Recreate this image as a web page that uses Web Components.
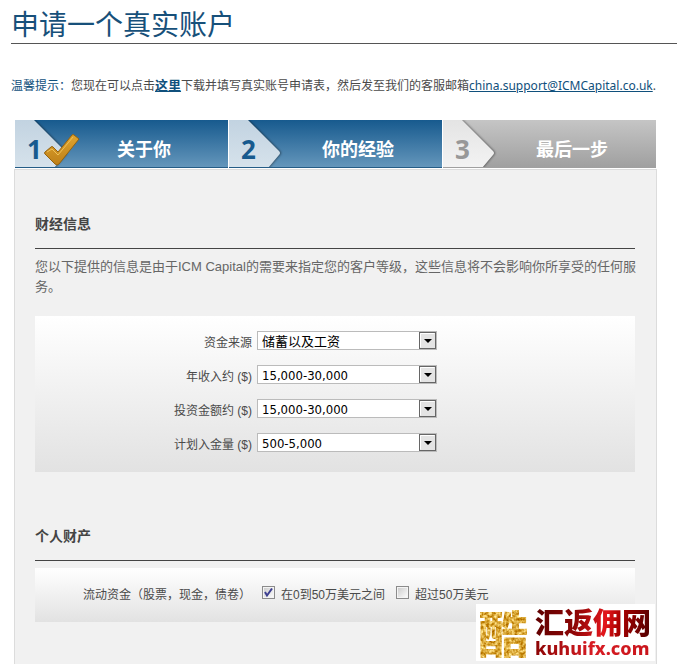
<!DOCTYPE html>
<html lang="zh-CN">
<head>
<meta charset="utf-8">
<meta name="viewport" content="width=device-width, initial-scale=1">
<title>申请一个真实账户</title>
<style>
    body {
        margin: 0;
        background: #fff;
        color: #4a4a4a;
        font: 12px/20px "Noto Sans", "Noto Sans CJK SC", sans-serif;
    }
</style>
</head>
<body>
<account-page>
    <step-item slot="steps" number="1" state="done">关于你</step-item>
    <step-item slot="steps" number="2" state="active">你的经验</step-item>
    <step-item slot="steps" number="3" state="pending">最后一步</step-item>

    <form-section id="form" heading="财经信息" note="您以下提供的信息是由于ICM Capital的需要来指定您的客户等级，这些信息将不会影响你所享受的任何服务。">
        <select-row label="资金来源" options="储蓄以及工资"></select-row>
        <select-row label="年收入约 ($)" options="15,000-30,000"></select-row>
        <select-row label="投资金额约 ($)" options="15,000-30,000"></select-row>
        <select-row label="计划入金量 ($)" options="500-5,000"></select-row>
    </form-section>

    <form-section heading="个人财产">
        <check-row label="流动资金（股票，现金，债卷）">
            <check-option checked>在0到50万美元之间</check-option>
            <check-option>超过50万美元</check-option>
        </check-row>
    </form-section>
</account-page>
<site-badge></site-badge>

<script>
class AccountPage extends HTMLElement {
    constructor() {
        super()
        this.attachShadow({ mode: "open" })
        this.shadowRoot.innerHTML = `
            <style>
                :host {
                    display: flex;
                    flex-direction: column;
                    min-height: 100vh;
                }

                header {
                    margin-left: 11px;
                }

                h1 {
                    margin: 0;
                    padding: 5px 0 0;
                    border-bottom: 1px solid #555;
                    color: #17507a;
                    font-size: 28px;
                    line-height: 38px;
                    font-weight: 400;
                }

                p {
                    margin: 31px 0 24px;
                    white-space: nowrap;
                }

                .tip, a {
                    color: #10507c;
                }

                .here {
                    font-size: 13px;
                    font-weight: 700;
                }

                nav {
                    display: grid;
                    grid-template-columns: repeat(3, 1fr);
                    gap: 1px;
                    margin: 0 21px 1px 15px;
                }

                main {
                    flex: 1;
                    margin: 0 20px 0 14px;
                    padding: 0 21px 0 20px;
                    border: 1px solid #dcdcdc;
                    border-bottom: 0;
                    background: #f1f1f1;
                }
            </style>

            <header>
                <h1>申请一个真实账户</h1>
                <p><span class="tip">温馨提示：</span>您现在可以点击<a class="here" href="#form">这里</a>下载并填写真实账号申请表，然后发至我们的客服邮箱<a href="mailto:china.support@ICMCapital.co.uk">china.support@ICMCapital.co.uk</a>.</p>
            </header>
            <nav><slot name="steps"></slot></nav>
            <main><slot></slot></main>
        `
    }
}

class StepItem extends HTMLElement {
    constructor() {
        super()
        this.attachShadow({ mode: "open" })
    }

    connectedCallback() {
        const number = this.getAttribute("number")
        const state = this.getAttribute("state")
        // The tick is only drawn on a finished step
        const tick = `
            <svg class="tick" width="38" height="36" viewBox="0 0 38 36" aria-hidden="true">
                <defs>
                    <linearGradient id="gold" x1="0" y1="0" x2="0" y2="1">
                        <stop offset="0" stop-color="#e0a52f"/>
                        <stop offset="1" stop-color="#bd7f18"/>
                    </linearGradient>
                </defs>
                <path d="M2 20 8 15Q9 14 10 15L15 20 29 3Q30 2 31 3L36 7 16 32Q14 34 12 32L2 22Q1 21 2 20Z" fill="url(#gold)" stroke="#94620f"/>
                <path d="M4 20 9 17 15 23 30 5" fill="none" stroke="#efc057"/>
            </svg>`
        this.shadowRoot.innerHTML = `
            <style>
                :host {
                    display: block;
                    position: relative;
                    height: 48px;
                    overflow: hidden;
                    box-sizing: border-box;
                    background: linear-gradient(#175a8e, #6496bb);
                    border-bottom: 1px solid #245c86;
                    --arrow-top: #c2d3e1;
                    --arrow-bottom: #d6e2eb;
                    --number: #175a8e;
                }

                :host([state="pending"]) {
                    background: linear-gradient(#c5c5c5, #a0a0a0);
                    border-color: #a0a0a0;
                    --arrow-top: #e4e4e4;
                    --arrow-bottom: #f3f3f3;
                    --number: #989898;
                }

                .arrow, .tick {
                    position: absolute;
                    left: 0;
                    top: 0;
                }

                .arrow {
                    filter: drop-shadow(1px 0 1px rgba(0, 0, 0, .45));
                }

                .tick {
                    left: 28px;
                    top: 12px;
                }

                .content {
                    position: relative;
                    display: flex;
                    align-items: center;
                    padding-top: 10px;
                    color: #fff;
                    font-size: 18px;
                    line-height: 38px;
                    font-weight: 700;
                }

                .number {
                    width: 33px;
                    padding-left: 12px;
                    color: var(--number);
                    font-size: 26px;
                }

                .title {
                    flex: 1;
                    text-align: center;
                }
            </style>

            <svg class="arrow" width="56" height="48" viewBox="0 0 56 48" aria-hidden="true">
                <defs>
                    <linearGradient id="face" x1="0" y1="0" x2="0" y2="1">
                        <stop offset="0" stop-color="var(--arrow-top)"/>
                        <stop offset="1" stop-color="var(--arrow-bottom)"/>
                    </linearGradient>
                </defs>
                <path d="M0 0H19L50 31Q52 33 50 35L39 48H0Z" fill="url(#face)"/>
            </svg>
            <div class="content">
                <span class="number">${number}</span>
                <span class="title"><slot></slot></span>
            </div>
            ${state === "done" ? tick : ""}
        `
    }
}

class FormSection extends HTMLElement {
    constructor() {
        super()
        this.attachShadow({ mode: "open" })
    }

    connectedCallback() {
        const note = this.getAttribute("note")
        this.shadowRoot.innerHTML = `
            <style>
                :host {
                    display: block;
                    margin-bottom: 10px;
                }

                h2 {
                    margin: 0;
                    padding: 44px 0 14px;
                    border-bottom: 1px solid #444;
                    color: #444;
                    font-size: 14px;
                    line-height: 20px;
                    font-weight: 700;
                }

                p {
                    margin: 8px -4px 19px 0;
                    color: #666;
                    font-family: "Liberation Sans", "Noto Sans CJK SC", sans-serif;
                    font-size: 13px;
                }

                .box {
                    margin-top: 7px;
                    padding: 15px 0 19px;
                    background: linear-gradient(#fff, #e2e2e2);
                }
            </style>

            <h2>${this.getAttribute("heading")}</h2>
            ${note ? `<p>${note}</p>` : ""}
            <div class="box"><slot></slot></div>
        `
    }
}

class SelectRow extends HTMLElement {
    constructor() {
        super()
        this.attachShadow({ mode: "open" })
    }

    connectedCallback() {
        const options = this.getAttribute("options").split("|")
        this.shadowRoot.innerHTML = `
            <style>
                :host {
                    display: grid;
                    grid-template-columns: 217px 180px;
                    gap: 5px;
                    align-items: start;
                    margin-bottom: 14px;
                }

                :host(:last-of-type) {
                    margin-bottom: 0;
                }

                label {
                    padding-top: 4px;
                    font-family: "Liberation Sans", "Noto Sans CJK SC", sans-serif;
                    line-height: 16px;
                    text-align: right;
                }

                .field {
                    display: grid;
                    position: relative;
                }

                select {
                    appearance: none;
                    height: 19px;
                    margin: 0;
                    padding: 2px 20px 0 4px;
                    border: 1px solid #bbb;
                    border-radius: 0;
                    background: #fff;
                    color: #000;
                    font: 13px/16px "DejaVu Sans Condensed", "Noto Sans CJK SC", sans-serif;
                }

                svg {
                    position: absolute;
                    right: 0;
                    top: 0;
                    pointer-events: none;
                }
            </style>

            <label for="choice">${this.getAttribute("label")}</label>
            <div class="field">
                <select id="choice">${options.map(text => `<option>${text}</option>`).join("")}</select>
                <svg width="18" height="19" viewBox="0 0 18 19" aria-hidden="true">
                    <rect x=".5" y="1.5" width="16" height="16" fill="#e4e4e4" stroke="#666"/>
                    <path d="M1.500 16.500V2.500H15.500" fill="none" stroke="#fff"/>
                    <path d="M5 8h8l-4 4z" fill="#000"/>
                </svg>
            </div>
        `
    }
}

class CheckRow extends HTMLElement {
    constructor() {
        super()
        this.attachShadow({ mode: "open" })
    }

    connectedCallback() {
        this.shadowRoot.innerHTML = `
            <style>
                :host {
                    display: block;
                    font-family: "Liberation Sans", "Noto Sans CJK SC", sans-serif;
                }

                fieldset {
                    display: flex;
                    gap: 11px;
                    margin: 0;
                    padding: 0 0 0 48px;
                    border: 0;
                }

                .legend {
                    line-height: 16px;
                    padding-top: 4px;
                }
            </style>

            <fieldset aria-labelledby="legend">
                <span class="legend" id="legend">${this.getAttribute("label")}</span>
                <slot></slot>
            </fieldset>
        `
    }
}

class CheckOption extends HTMLElement {
    constructor() {
        super()
        this.attachShadow({ mode: "open" })
        this.shadowRoot.innerHTML = `
            <style>
                :host {
                    display: block;
                }

                label {
                    display: flex;
                    gap: 6px;
                    line-height: 16px;
                    padding-top: 3px;
                }

                .text {
                    padding-top: 1px;
                }

                .mark {
                    display: grid;
                    width: 13px;
                    height: 13px;
                }

                input, svg {
                    grid-area: 1 / 1;
                }

                input {
                    appearance: none;
                    width: 13px;
                    height: 13px;
                    margin: 0;
                    border: 1px solid #8b8b8b;
                    background: linear-gradient(135deg, #c9c9c9, #fff);
                    box-shadow: inset 0 0 0 1px #f4f4f4;
                }

                svg {
                    visibility: hidden;
                    pointer-events: none;
                }

                input:checked + svg {
                    visibility: visible;
                }
            </style>

            <label>
                <span class="mark">
                    <input type="checkbox">
                    <svg width="13" height="13" viewBox="0 0 13 13" aria-hidden="true">
                        <path d="M3 6 5 9.500 10 2.500" fill="none" stroke="#3d3f90" stroke-width="2"/>
                    </svg>
                </span>
                <span class="text"><slot></slot></span>
            </label>
        `
    }

    connectedCallback() {
        this.shadowRoot.querySelector("input").checked = this.hasAttribute("checked")
    }
}

class SiteBadge extends HTMLElement {
    constructor() {
        super()
        this.attachShadow({ mode: "open" })
        this.shadowRoot.innerHTML = `
            <style>
                :host {
                    position: fixed;
                    right: 22px;
                    bottom: 3px;
                    display: flex;
                    gap: 7px;
                    width: 177px;
                    padding-left: 2px;
                    height: 57px;
                    background: #fff;
                    font-family: "Noto Sans", "Noto Sans CJK SC", sans-serif;
                }

                .mark {
                    width: 50px;
                    color: #e2b03c;
                    font: 900 50px/54px "Noto Sans CJK SC", sans-serif;
                    filter: url(#glitter);
                }

                .words {
                    display: flex;
                    flex-direction: column;
                }

                .name, .site {
                    color: transparent;
                    -webkit-background-clip: text;
                    background-clip: text;
                    background-image: linear-gradient(100deg, #5c0000, #8c0505 35%, #e3161c 60%, #a00 72%, #4d0000);
                    font-weight: 900;
                    white-space: nowrap;
                }

                .name {
                    font-family: "Noto Sans CJK SC", sans-serif;
                    font-size: 29px;
                    line-height: 34px;
                }

                .site {
                    background-image: linear-gradient(90deg, #8c0505, #d81d24 50%, #c8141b);
                    font-size: 18px;
                    line-height: 20px;
                    font-weight: 800;
                }

                svg {
                    position: absolute;
                }
            </style>

            <svg width="0" height="0" aria-hidden="true">
                <filter id="glitter" x="0" y="0" width="1" height="1" color-interpolation-filters="sRGB">
                    <feTurbulence type="fractalNoise" baseFrequency=".35" numOctaves="2" seed="4"/>
                    <feColorMatrix values=".6 0 0 0 .56  .9 0 0 0 .22  1.200 0 0 0 -.36  0 0 0 0 1"/>
                    <feComposite in2="SourceAlpha" operator="in"/>
                </filter>
            </svg>
            <span class="mark">酷</span>
            <span class="words">
                <span class="name">汇返佣网</span>
                <span class="site">kuhuifx.com</span>
            </span>
        `
    }
}

customElements.define('account-page', AccountPage);
customElements.define('step-item', StepItem);
customElements.define('form-section', FormSection);
customElements.define('select-row', SelectRow);
customElements.define('check-row', CheckRow);
customElements.define('check-option', CheckOption);
customElements.define('site-badge', SiteBadge);
</script>
</body>
</html>
